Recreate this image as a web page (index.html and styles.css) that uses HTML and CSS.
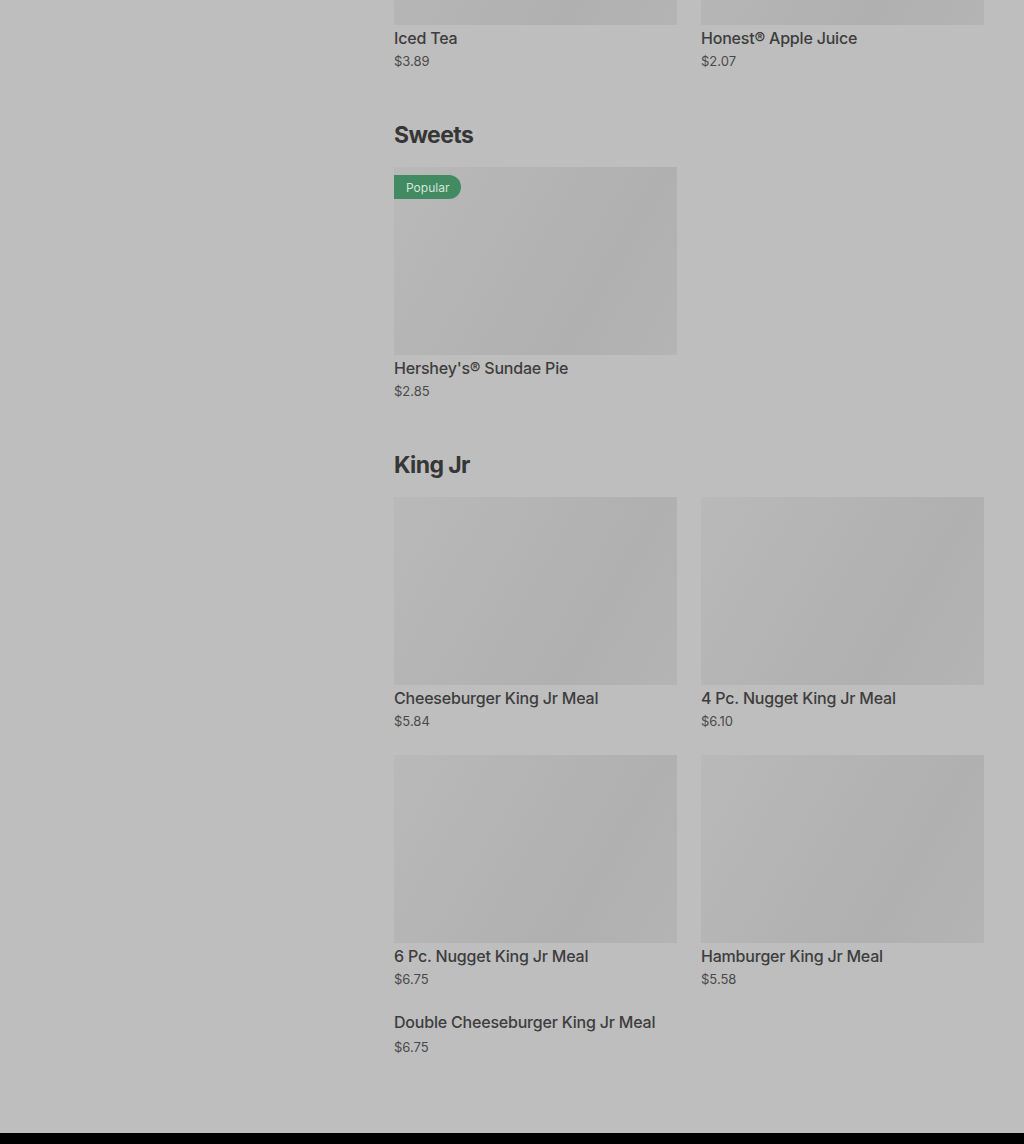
FILE: index.html
```html
<!DOCTYPE html>
<html lang="en">
<head>
    <meta charset="UTF-8">
    <meta name="viewport" content="width=device-width, initial-scale=1.0">
    <title>Menu</title>
    <link rel="stylesheet" href="styles.css">
</head>
<body>
    <div class="page">
        <aside class="sidebar"></aside>

        <main class="menu">
            <!-- Drinks (scrolled past) -->
            <section class="menu-section first">
                <div class="grid">
                    <div class="item">
                        <div class="thumb"></div>
                        <div class="name">Iced Tea</div>
                        <div class="price">$3.89</div>
                    </div>
                    <div class="item">
                        <div class="thumb"></div>
                        <div class="name">Honest® Apple Juice</div>
                        <div class="price">$2.07</div>
                    </div>
                </div>
            </section>

            <section class="menu-section">
                <h2>Sweets</h2>
                <div class="grid">
                    <div class="item">
                        <div class="thumb">
                            <span class="badge">Popular</span>
                        </div>
                        <div class="name">Hershey's® Sundae Pie</div>
                        <div class="price">$2.85</div>
                    </div>
                </div>
            </section>

            <section class="menu-section">
                <h2>King Jr</h2>
                <div class="grid">
                    <div class="item">
                        <div class="thumb"></div>
                        <div class="name">Cheeseburger King Jr Meal</div>
                        <div class="price">$5.84</div>
                    </div>
                    <div class="item">
                        <div class="thumb"></div>
                        <div class="name">4 Pc. Nugget King Jr Meal</div>
                        <div class="price">$6.10</div>
                    </div>
                    <div class="item">
                        <div class="thumb"></div>
                        <div class="name">6 Pc. Nugget King Jr Meal</div>
                        <div class="price">$6.75</div>
                    </div>
                    <div class="item">
                        <div class="thumb"></div>
                        <div class="name">Hamburger King Jr Meal</div>
                        <div class="price">$5.58</div>
                    </div>
                    <div class="item no-thumb">
                        <div class="name">Double Cheeseburger King Jr Meal</div>
                        <div class="price">$6.75</div>
                    </div>
                </div>
            </section>
        </main>
    </div>

    <footer class="footer"></footer>
</body>
</html>
```

FILE: styles.css
```css
html, body {
    margin: 0;
    background: #bebebe;
    font-family: Inter, "Noto Sans", sans-serif;
    color: #3b3b3b;
}

.page {
    display: flex;
    gap: 40px;
    padding: 0 40px;
    height: 1133px;
    overflow: hidden;
}

.sidebar {
    width: 314px;
    flex-shrink: 0;
}

.menu {
    width: 590px;
    margin-top: -163px; /* page is scrolled */
}

.menu-section {
    margin-top: 48px;
}

.menu-section.first {
    margin-top: 0;
}

h2 {
    margin: 0 0 16px;
    padding-top: 1px;
    font-size: 23px;
    line-height: 32px;
    font-weight: 700;
    color: #363636;
    letter-spacing: -0.6px;
}

.grid {
    display: grid;
    grid-template-columns: repeat(2, 283px);
    column-gap: 24px;
    row-gap: 25px;
}

.thumb {
    position: relative;
    height: 188px;
    background: linear-gradient(120deg, #b9b9b9 0%, #b3b3b3 45%, #b0b0b0 70%, #b4b4b4 100%);
}

.badge {
    position: absolute;
    top: 8px;
    left: 0;
    height: 24px;
    padding: 0 12px;
    display: flex;
    align-items: center;
    background: #428a61;
    color: #d4e6da;
    font-size: 12px;
    border-radius: 0 12px 12px 0;
}

.name {
    margin-top: 3px;
    font-size: 16px;
    line-height: 20px;
    font-weight: 500;
    color: #3d3d3d;
    letter-spacing: -0.2px;
}

.price {
    margin-top: 4px;
    font-size: 13px;
    line-height: 18px;
    color: #4a4a4a;
}

.no-thumb {
    margin-top: -1px;
}

.no-thumb .name {
    margin-top: 0;
}

.no-thumb .price {
    margin-top: 6px;
}

.footer {
    height: 11px;
    background: #000;
}
```
